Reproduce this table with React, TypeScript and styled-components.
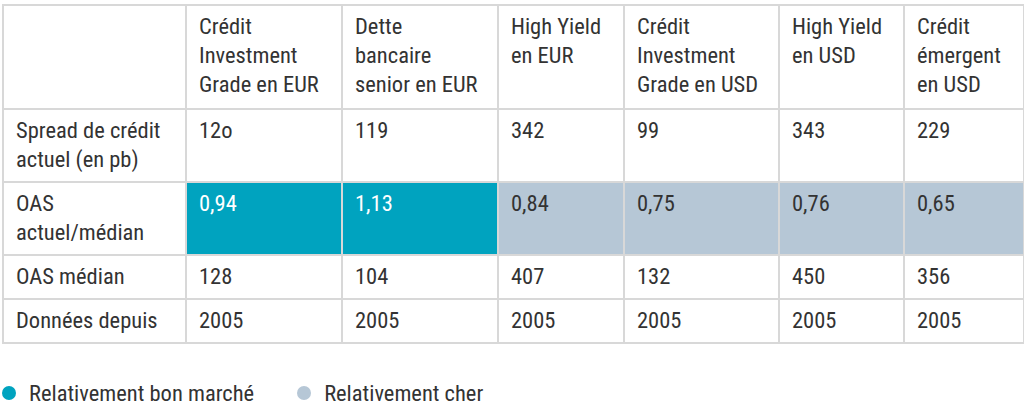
import styled, { createGlobalStyle } from 'styled-components';

type Tone = 'cheap' | 'dear' | undefined;

interface Row {
  label: string[];
  values: string[];
  tones?: Tone[];
}

// header lines broken as in the source chart
const headers: string[][] = [
  ['Crédit', 'Investment', 'Grade en EUR'],
  ['Dette', 'bancaire', 'senior en EUR'],
  ['High Yield', 'en EUR'],
  ['Crédit', 'Investment', 'Grade en USD'],
  ['High Yield', 'en USD'],
  ['Crédit', 'émergent', 'en USD'],
];

const colWidths = [183, 156, 156, 126, 155, 125, 120];

const rows: Row[] = [
  {
    label: ['Spread de crédit', 'actuel (en pb)'],
    values: ['12o', '119', '342', '99', '343', '229'],
  },
  {
    label: ['OAS', 'actuel/médian'],
    values: ['0,94', '1,13', '0,84', '0,75', '0,76', '0,65'],
    tones: ['cheap', 'cheap', 'dear', 'dear', 'dear', 'dear'],
  },
  { label: ['OAS médian'], values: ['128', '104', '407', '132', '450', '356'] },
  {
    label: ['Données depuis'],
    values: ['2005', '2005', '2005', '2005', '2005', '2005'],
  },
];

const colors = {
  cheap: '#00a3bf',
  dear: '#b6c7d6',
  border: '#d8d8d8',
  text: '#333333',
};

const GlobalStyle = createGlobalStyle`
  body {
    margin: 0;
    background: #ffffff;
    font-family: 'Roboto Condensed', 'Liberation Sans Narrow', 'DejaVu Sans Condensed', Roboto, sans-serif;
    font-stretch: condensed;
    color: ${colors.text};
  }
`;

const Page = styled.div`
  padding: 4px 1px 0 2px;
`;

const Table = styled.table`
  border-collapse: collapse;
  table-layout: fixed;
  width: 1021px;
  font-size: 22.5px;
  line-height: 29px;
`;

const Cell = styled.td<{ $tone?: Tone }>`
  border: 2px solid ${colors.border};
  padding: 6px 8px 7px 12px;
  vertical-align: top;
  text-align: left;
  font-weight: 400;
  white-space: nowrap;
  background: ${({ $tone }) =>
    $tone === 'cheap' ? colors.cheap : $tone === 'dear' ? colors.dear : '#fff'};
  color: ${({ $tone }) => ($tone === 'cheap' ? '#ffffff' : colors.text)};
`;

const HeadCell = styled(Cell).attrs({ as: 'th' })`
  padding-bottom: 9px;
`;

const Line = styled.span`
  display: block;
`;

const Legend = styled.div`
  display: flex;
  align-items: center;
  gap: 43px;
  margin-top: 36px;
  font-size: 22.5px;
`;

const LegendItem = styled.div`
  display: flex;
  align-items: center;
  gap: 13px;
`;

const Dot = styled.span<{ $color: string }>`
  width: 14px;
  height: 14px;
  border-radius: 50%;
  background: ${({ $color }) => $color};
`;

export default function App() {
  return (
    <Page>
      <GlobalStyle />
      <Table>
        <colgroup>
          {colWidths.map((w, i) => (
            <col key={i} style={{ width: w }} />
          ))}
        </colgroup>
        <thead>
          <tr>
            <HeadCell />
            {headers.map((h) => (
              <HeadCell key={h.join(' ')}>
                {h.map((l) => (
                  <Line key={l}>{l}</Line>
                ))}
              </HeadCell>
            ))}
          </tr>
        </thead>
        <tbody>
          {rows.map((row) => (
            <tr key={row.label.join(' ')}>
              <Cell>
                {row.label.map((l) => (
                  <Line key={l}>{l}</Line>
                ))}
              </Cell>
              {row.values.map((v, i) => (
                <Cell key={i} $tone={row.tones?.[i]}>
                  {v}
                </Cell>
              ))}
            </tr>
          ))}
        </tbody>
      </Table>
      <Legend>
        <LegendItem>
          <Dot $color={colors.cheap} />
          Relativement bon marché
        </LegendItem>
        <LegendItem>
          <Dot $color={colors.dear} />
          Relativement cher
        </LegendItem>
      </Legend>
    </Page>
  );
}
